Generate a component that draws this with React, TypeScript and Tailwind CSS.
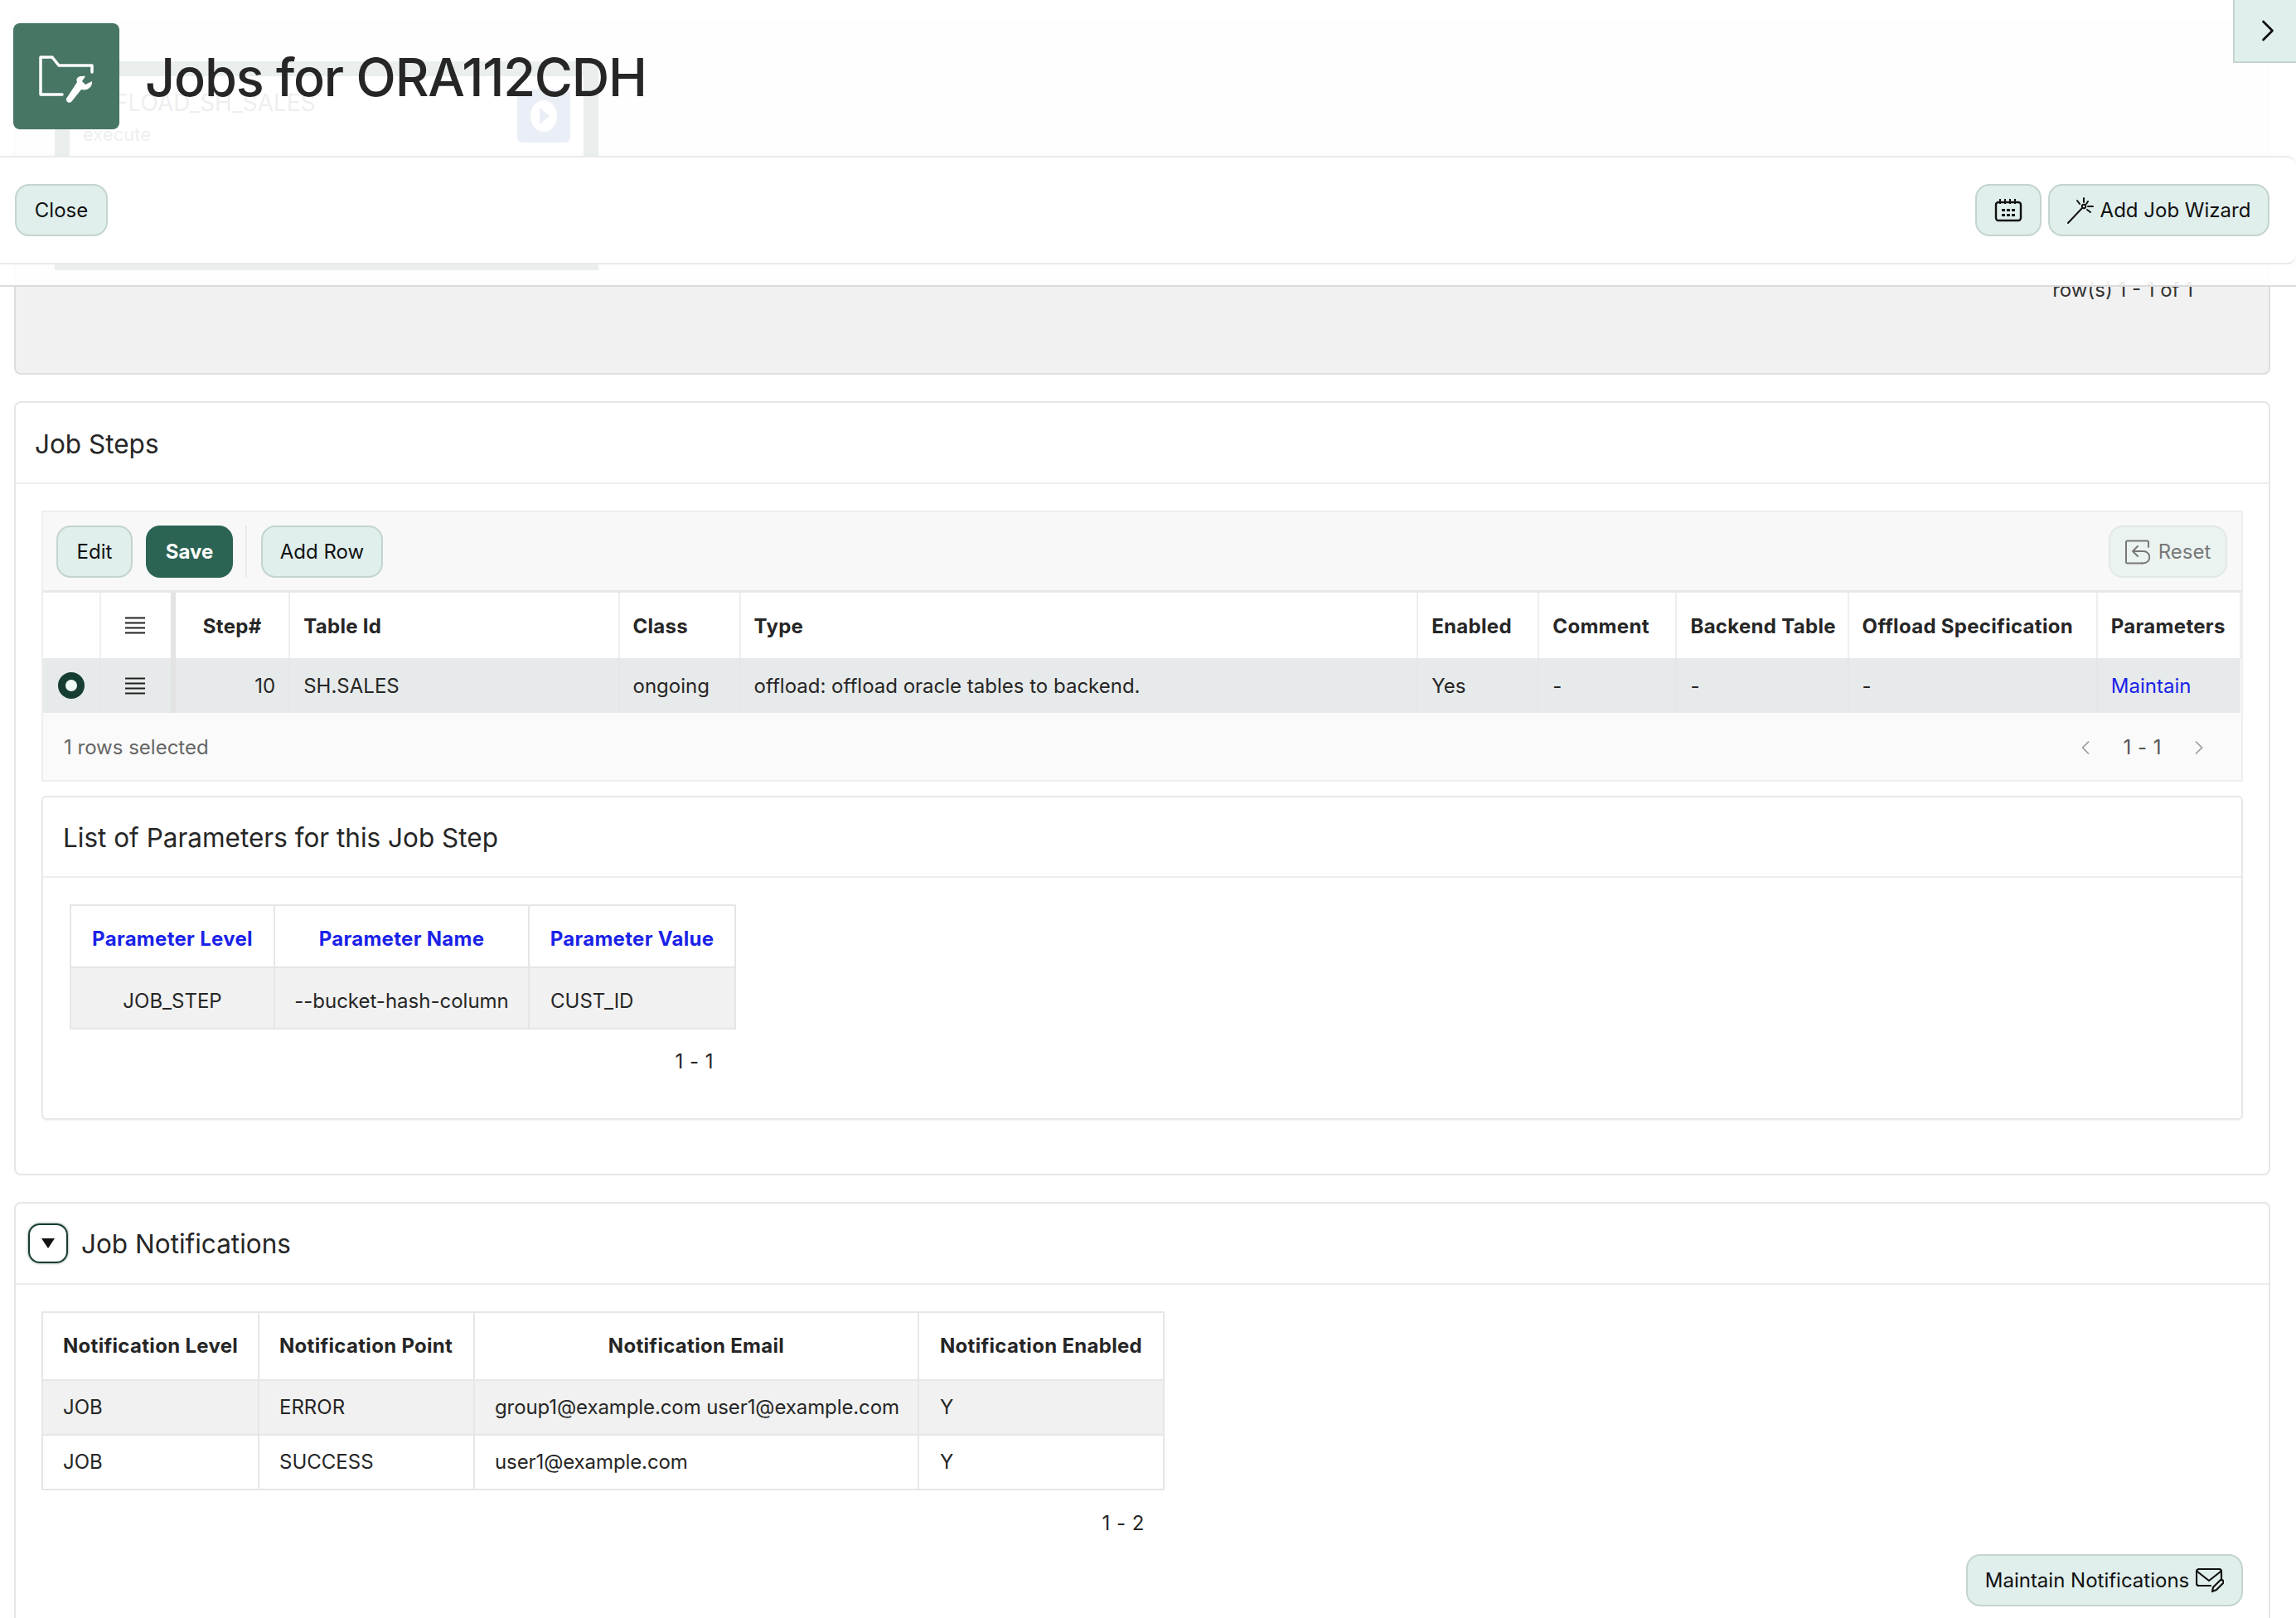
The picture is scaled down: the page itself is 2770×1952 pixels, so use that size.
import React from 'react';
import { ChevronLeft, ChevronRight } from 'lucide-react';

const stepColumns = [
  { label: 'Step#', width: 'w-[140px]', align: 'text-center' },
  { label: 'Table Id', width: 'w-[397px]', align: 'text-left' },
  { label: 'Class', width: 'w-[146px]', align: 'text-left' },
  { label: 'Type', width: 'w-[817px]', align: 'text-left' },
  { label: 'Enabled', width: 'w-[146px]', align: 'text-left' },
  { label: 'Comment', width: 'w-[166px]', align: 'text-left' },
  { label: 'Backend Table', width: 'w-[207px]', align: 'text-left' },
  { label: 'Offload Specification', width: 'w-[300px]', align: 'text-left' },
  { label: 'Parameters', width: 'w-[173px]', align: 'text-left' },
];

const notifications = [
  { level: 'JOB', point: 'ERROR', email: 'group1@example.com user1@example.com', enabled: 'Y', bg: 'bg-[#f1f1f1]' },
  { level: 'JOB', point: 'SUCCESS', email: 'user1@example.com', enabled: 'Y', bg: 'bg-white' },
];

function Btn({ className = '', children }: { className?: string; children: React.ReactNode }) {
  return (
    <button className={`h-[63px] rounded-[17px] border-2 border-[#c4d4cf] bg-[#e0efec] pt-[1px] text-[24px] text-[#111] flex items-center justify-center ${className}`}>
      {children}
    </button>
  );
}

function LinesIcon() {
  return (
    <svg width="24" height="21" viewBox="0 0 24 21" className="mx-auto" stroke="#222" strokeWidth="2">
      <path d="M0 1.500h24M0 7.500h24M0 13.500h24M0 19.500h24" />
    </svg>
  );
}

function FolderWrench() {
  return (
    <svg width="66" height="58" viewBox="0 0 66 58" fill="none" stroke="#fff" strokeWidth="3.500" strokeLinejoin="round" strokeLinecap="round">
      <path d="M28 47H2V2h14l8 10h40v8" />
      <path d="M33 52L46 32C44 28 47 24 56 25L52 31L56 35L64 31C65 38 58 43 51 41L39 56C37 58 32 56 33 52Z" fill="#fff" stroke="none" />
    </svg>
  );
}

function CalendarIcon() {
  return (
    <svg width="34" height="28" viewBox="0 0 34 28" fill="none" stroke="#111" strokeWidth="2.400">
      <rect x="2" y="4" width="30" height="22" rx="3" />
      <path d="M7 0v6M13 0v6M19 0v6M25 0v6" strokeWidth="2" />
      <path d="M9 12h4v3H9zM15 12h4v3h-4zM21 12h4v3h-4zM9 18h4v3H9zM15 18h4v3h-4zM21 18h4v3h-4z" fill="#111" stroke="none" />
    </svg>
  );
}

function WandIcon() {
  return (
    <svg width="32" height="32" viewBox="0 0 32 32" fill="none" stroke="#111" strokeWidth="2" strokeLinecap="round">
      <path d="M1 31l17-18" />
      <circle cx="20" cy="11" r="2.200" />
      <path d="M20 1v5M12 4l3 4M25 5l-2 3M31 11h-6M28 18l-4-3" />
    </svg>
  );
}

function ResetIcon() {
  return (
    <svg width="30" height="30" viewBox="0 0 30 30" fill="none" stroke="#777" strokeWidth="2" strokeLinecap="round" strokeLinejoin="round">
      <path d="M28 9V3a1.500 1.500 0 0 0-1.500-1.500h-24A1.500 1.500 0 0 0 1 3v24a1.500 1.500 0 0 0 1.500 1.500h18" />
      <path d="M15 8l-6 6 6 6M9 14h13a6 6 0 0 1 0 14.500h-2" />
    </svg>
  );
}

function MailEditIcon() {
  return (
    <svg width="34" height="30" viewBox="0 0 34 30" fill="none" stroke="#111" strokeWidth="2.200" strokeLinecap="round" strokeLinejoin="round">
      <path d="M18 21H4a3 3 0 0 1-3-3V4a3 3 0 0 1 3-3h24a3 3 0 0 1 3 3v10" />
      <path d="M2 4l14 11L30 4" />
      <path d="M20 28l1-5 8-8a2.500 2.500 0 0 1 4 3l-8 8z" />
    </svg>
  );
}

export default function App() {
  return (
    <div className="relative h-[1952px] w-[2770px] overflow-hidden bg-white font-['Inter',sans-serif] text-[24px] text-[#262626]">
      {/* Sticky header, page content shows faintly through it */}
      <div className="absolute inset-x-0 top-0 z-10 flex h-[346px] flex-col">
        <div className="flex h-[188px] items-start bg-white/90 pl-[16px] pt-[28px]">
          <div className="flex h-[128px] w-[128px] items-center justify-center rounded-[8px] bg-[#477664] pt-[7px]">
            <FolderWrench />
          </div>
          <h1 className="ml-[31px] mt-[25px] text-[63px] font-medium leading-[80px] tracking-[-1.2px] text-[#262626]">Jobs for ORA112CDH</h1>
        </div>
        <div className="flex h-[131px] items-center justify-between rounded-r-[12px] border-y-2 border-[#ebebeb] bg-white pl-[18px] pr-[32px] shadow-[0_2px_6px_rgba(0,0,0,0.06)]">
          <Btn className="w-[112px]">Close</Btn>
          <div className="flex gap-[8px]">
            <Btn className="w-[80px]"><CalendarIcon /></Btn>
            <Btn className="w-[267px] gap-[8px]"><WandIcon />Add Job Wizard</Btn>
          </div>
        </div>
        <div className="flex-1 border-b-2 border-[#dcdcdc] bg-white/90" />
      </div>

      <button className="absolute right-0 top-0 z-20 flex h-[76px] w-[76px] items-center justify-center border-b-2 border-l-2 border-[#c4d4cf] bg-[#e0efec] pl-[5px]">
        <ChevronRight size={44} strokeWidth={1.500} className="text-[#111]" />
      </button>

      <div className="flex flex-col gap-[32px] pl-[17px] pr-[31px] pt-[24px]">
        {/* Jobs region, mostly under the header */}
        <section className="h-[428px] rounded-b-[8px] border-2 border-[#dedede] bg-[#f1f1f1] pl-[47px] pt-[48px]">
          <div className="h-[252px] w-[656px] border-[18px] border-[#2d5f52] bg-white pl-[16px]">
            <div className="flex items-start justify-between pr-[16px]">
              <div>
                <div className="mt-[12px] text-[28px] leading-[40px] text-[#555]">OFFLOAD_SH_SALES</div>
                <div className="mt-[3px] text-[22px] leading-[30px] text-[#555]">execute</div>
              </div>
              <div className="mt-[16px] flex h-[64px] w-[64px] items-center justify-center rounded-[6px] bg-[#2d5faf]">
                <svg width="32" height="38" viewBox="0 0 32 38"><ellipse cx="16" cy="19" rx="16" ry="19" fill="#fff" /><path d="M11 9l12 10-12 10z" fill="#2d5faf" /></svg>
              </div>
            </div>
          </div>
          <div className="mt-[6px] pr-[91px] text-right text-[24px] leading-[36px] text-[#333]">row(s) 1 - 1 of 1</div>
        </section>

        {/* Job Steps */}
        <section className="h-[934px] rounded-[8px] border-2 border-[#e6e6e6] bg-white">
          <div className="flex h-[98px] items-center border-b-2 border-[#ededed] pl-[23px] pt-[3px] text-[31.5px]">Job Steps</div>
          <div className="px-[31px] pt-[32px]">
            <div className="border-2 border-[#eeeeee]">
              <div className="flex h-[97px] items-center justify-between border-b-[3px] border-[#e8e8e8] bg-[#f8f8f8] pl-[16px] pr-[17px]">
                <div className="flex items-center">
                  <Btn className="w-[92px]">Edit</Btn>
                  <button className="ml-[16px] h-[63px] w-[105px] rounded-[17px] bg-[#2b6354] pt-[1px] text-[24px] font-bold text-white">Save</button>
                  <div className="ml-[15px] h-[63px] w-[2px] bg-[#eaeaea]" />
                  <Btn className="ml-[17px] w-[147px]">Add Row</Btn>
                </div>
                <button className="flex h-[63px] w-[143px] items-center justify-center gap-[10px] rounded-[17px] border-2 border-[#e1e8e6] bg-[#ebf3f1] pt-[1px] text-[24px] text-[#777]">
                  <ResetIcon />Reset
                </button>
              </div>
              <table className="w-full table-fixed border-collapse">
                <colgroup>
                  <col className="w-[69px]" />
                  <col className="w-[88px]" />
                  {stepColumns.map((c) => <col key={c.label} className={c.width} />)}
                </colgroup>
                <thead>
                  <tr className="h-[79px] bg-white">
                    <th className="border-r-2 border-[#eeeeee]" />
                    <th className="border-r-[6px] border-[#e3e3e3] pr-[3px]"><LinesIcon /></th>
                    {stepColumns.map((c) => (
                      <th key={c.label} className={`whitespace-nowrap border-r-2 border-[#eeeeee] px-[16px] pt-[2px] font-bold tracking-[0.3px] ${c.align}`}>{c.label}</th>
                    ))}
                  </tr>
                </thead>
                <tbody>
                  <tr className="h-[66px] bg-[#e7eaea]">
                    <td className="border-r-2 border-[#e4e7e7]">
                      <div className="ml-[18px] h-[32px] w-[32px] rounded-full border-[9px] border-[#163d33] bg-[#f0fbf8]" />
                    </td>
                    <td className="border-r-[6px] border-[#e3e3e3] pr-[3px]"><LinesIcon /></td>
                    <td className="border-r-2 border-[#e4e7e7] px-[16px] pt-[2px] text-right">10</td>
                    <td className="border-r-2 border-[#e4e7e7] px-[16px] pt-[2px]">SH.SALES</td>
                    <td className="border-r-2 border-[#e4e7e7] px-[16px] pt-[2px]">ongoing</td>
                    <td className="border-r-2 border-[#e4e7e7] px-[16px] pt-[2px]">offload: offload oracle tables to backend.</td>
                    <td className="border-r-2 border-[#e4e7e7] px-[16px] pt-[2px]">Yes</td>
                    <td className="border-r-2 border-[#e4e7e7] px-[16px] pt-[2px]">-</td>
                    <td className="border-r-2 border-[#e4e7e7] px-[16px] pt-[2px]">-</td>
                    <td className="border-r-2 border-[#e4e7e7] px-[16px] pt-[2px]">-</td>
                    <td className="px-[16px] pt-[2px] text-[#1a22e8]">Maintain</td>
                  </tr>
                </tbody>
              </table>
              <div className="flex h-[81px] items-center justify-between bg-[#fafafa] pl-[25px] pr-[37px] pt-[2px] text-[#666]">
                <span>1 rows selected</span>
                <div className="flex items-center gap-[31px]">
                  <ChevronLeft size={28} strokeWidth={1.500} className="text-[#999]" />
                  <span className="tracking-[0.5px] text-[#555]">1 - 1</span>
                  <ChevronRight size={28} strokeWidth={1.500} className="text-[#999]" />
                </div>
              </div>
            </div>

            <div className="mt-[17px] h-[391px] rounded-[6px] border-2 border-[#e8e8e8] shadow-[0_1px_2px_rgba(0,0,0,0.06)]">
              <div className="flex h-[97px] items-center border-b-2 border-[#ededed] pl-[24px] pt-[2px] text-[31.5px]">List of Parameters for this Job Step</div>
              <div className="w-[834px] pl-[32px] pt-[32px]">
                <table className="w-[802px] table-fixed border-collapse border-2 border-[#e6e6e6]">
                  <colgroup>
                    <col className="w-[246px]" />
                    <col className="w-[307px]" />
                    <col className="w-[249px]" />
                  </colgroup>
                  <thead>
                    <tr className="h-[75px] text-[#1a22e8]">
                      <th className="border-r-2 border-[#e6e6e6] pt-[7px] text-center font-bold tracking-[0.3px]">Parameter Level</th>
                      <th className="border-r-2 border-[#e6e6e6] pt-[7px] text-center font-bold tracking-[0.3px]">Parameter Name</th>
                      <th className="pt-[7px] text-center font-bold tracking-[0.3px]">Parameter Value</th>
                    </tr>
                  </thead>
                  <tbody>
                    <tr className="h-[74px] border-t-2 border-[#e6e6e6] bg-[#f1f1f1]">
                      <td className="border-r-2 border-[#e6e6e6] pt-[7px] text-center">JOB_STEP</td>
                      <td className="border-r-2 border-[#e6e6e6] pt-[7px] text-center">--bucket-hash-column</td>
                      <td className="pl-[25px] pt-[7px]">CUST_ID</td>
                    </tr>
                  </tbody>
                </table>
                <div className="pr-[25px] pt-[21px] text-right leading-[36px] tracking-[0.5px]">1 - 1</div>
              </div>
            </div>
          </div>
        </section>

        {/* Job Notifications */}
        <section className="h-[600px] rounded-t-[8px] border-2 border-[#e6e6e6] bg-white">
          <div className="flex h-[98px] items-center gap-[16px] border-b-2 border-[#ededed] pl-[15px] text-[31.5px]">
            <button className="flex h-[48px] w-[48px] items-center justify-center rounded-[14px] border-2 border-[#163d33] shadow-[0_0_3px_rgba(22,61,51,0.6)]">
              <svg width="16" height="12" viewBox="0 0 16 12"><path d="M0 0h16L8 12z" fill="#111" /></svg>
            </button>
            <span className="pt-[2px]">Job Notifications</span>
          </div>
          <div className="px-[31px] pt-[32px]">
            <table className="w-[1353px] table-fixed border-collapse border-2 border-[#e6e6e6]">
              <colgroup>
                <col className="w-[261px]" />
                <col className="w-[260px]" />
                <col className="w-[536px]" />
                <col className="w-[296px]" />
              </colgroup>
              <thead>
                <tr className="h-[82px]">
                  <th className="border-r-2 border-[#e6e6e6] pl-[24px] text-left font-bold tracking-[0.3px]">Notification Level</th>
                  <th className="border-r-2 border-[#e6e6e6] pl-[24px] text-left font-bold tracking-[0.3px]">Notification Point</th>
                  <th className="border-r-2 border-[#e6e6e6] text-center font-bold tracking-[0.3px]">Notification Email</th>
                  <th className="pl-[25px] text-left font-bold tracking-[0.3px]">Notification Enabled</th>
                </tr>
              </thead>
              <tbody>
                {notifications.map((n) => (
                  <tr key={n.point} className={`h-[66px] border-t-2 border-[#e6e6e6] ${n.bg}`}>
                    <td className="border-r-2 border-[#e6e6e6] pl-[24px]">{n.level}</td>
                    <td className="border-r-2 border-[#e6e6e6] pl-[24px]">{n.point}</td>
                    <td className="border-r-2 border-[#e6e6e6] pl-[24px] tracking-[-0.1px]">{n.email}</td>
                    <td className="pl-[25px]">{n.enabled}</td>
                  </tr>
                ))}
              </tbody>
            </table>
            <div className="w-[1331px] pt-[22px] text-right leading-[36px] tracking-[0.5px]">1 - 2</div>
            <div className="mt-[19px] flex justify-end">
              <Btn className="w-[334px] gap-[8px]">Maintain Notifications<MailEditIcon /></Btn>
            </div>
          </div>
        </section>
      </div>
    </div>
  );
}
